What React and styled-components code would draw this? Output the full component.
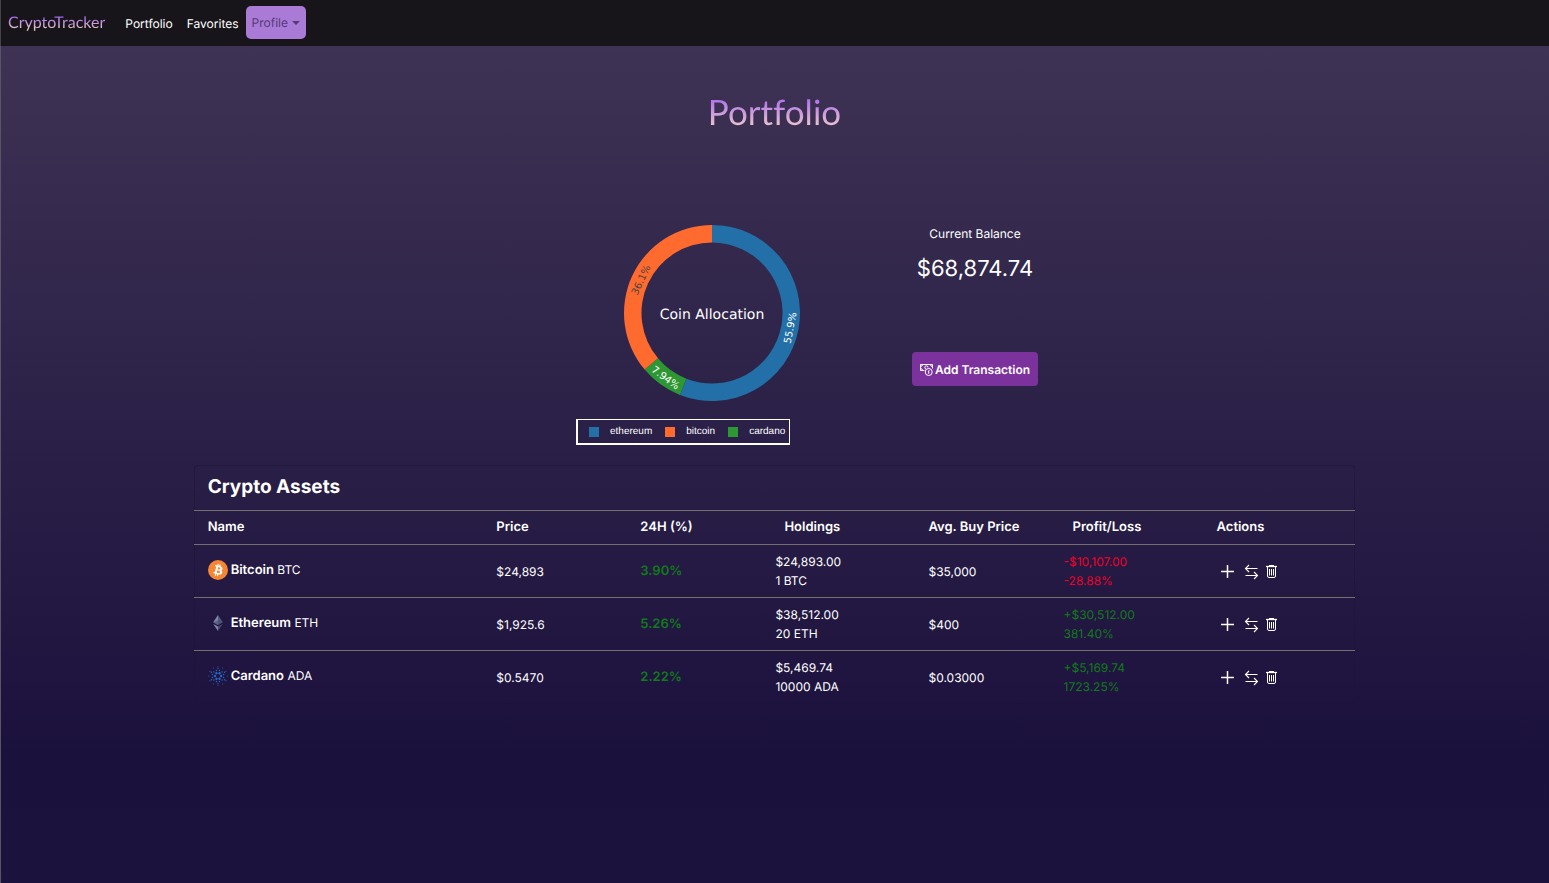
import React from "react";
import styled, { createGlobalStyle } from "styled-components";

const GlobalStyle = createGlobalStyle`
  *, *::before, *::after { box-sizing: border-box; }
  html { background: #1b123d; }
  body {
    margin: 0;
    min-height: 100vh;
    color: #fff;
    font: 400 12px/19px Inter, "Liberation Sans", sans-serif;
    text-rendering: geometricPrecision;
    background: linear-gradient(180deg, #403555 0%, #1b113d 85%, #1b123d 100%);
  }
`;

const Page = styled.div`
  min-height: 100vh;
  box-shadow: inset 1px 0 #5b5468;
`;

const NavBar = styled.nav`
  display: flex;
  align-items: center;
  height: 46px;
  padding: 0 8px;
  background: #17151a;
  box-shadow: inset 1px 0 #45424a;
`;

const Brand = styled.a`
  margin-right: 13px;
  font: 400 16px/22px Lato, sans-serif;
  text-decoration: none;
  color: transparent;
  background: linear-gradient(180deg, #a566f0 20%, #f5dcc0 90%);
  background-clip: text;
`;

const NavLink = styled.a`
  padding: 6px 7px;
  color: #fff;
  text-decoration: none;
`;

const ProfileButton = styled.button`
  display: flex;
  align-items: center;
  gap: 4px;
  height: 33px;
  margin-bottom: 1px;
  padding: 0 6px;
  border: 0;
  border-radius: 5px;
  font: inherit;
  text-rendering: inherit;
  color: #563a78;
  background: #a97bd6;
  &::after {
    content: "";
    border: 4px solid transparent;
    border-top-color: currentColor;
    border-bottom: 0;
  }
`;

const Title = styled.h1`
  width: fit-content;
  margin: 42px auto 86px;
  font: 400 35px/48px Lato, sans-serif;
  font-variant-ligatures: none;
  color: transparent;
  background: linear-gradient(180deg, #a566f0 15%, #f5d2c8 90%);
  background-clip: text;
`;

const Summary = styled.section`
  display: flex;
  justify-content: center;
`;

const ChartColumn = styled.div`
  display: flex;
  flex-direction: column;
  align-items: center;
  width: 401px;
  padding-top: 3px;
`;

const Legend = styled.ul`
  display: flex;
  align-items: center;
  align-self: flex-start;
  gap: 13px;
  height: 26px;
  margin: 18px 0 20px 65px;
  padding: 0 4px 0 11px;
  border: solid #fff;
  border-width: 1px 1px 2px 2px;
  list-style: none;
  font: 10px/15px "Liberation Sans", sans-serif;
`;

const LegendItem = styled.li`
  display: flex;
  align-items: center;
  gap: 11px;
  &::before {
    content: "";
    width: 10px;
    height: 10px;
    background: ${(p) => p.$color};
  }
`;

const BalanceColumn = styled.div`
  display: flex;
  flex-direction: column;
  align-items: center;
  width: 126px;
`;

const BalanceLabel = styled.p`
  margin: 2px 0 9px;
`;

const Balance = styled.p`
  margin: 0 0 66px;
  font-size: 22px;
  line-height: 34px;
`;

const AddButton = styled.button`
  display: flex;
  align-items: center;
  justify-content: center;
  gap: 2px;
  width: 100%;
  height: 34px;
  padding: 0;
  border: 0;
  border-radius: 4px;
  font: 600 12px/19px Inter, sans-serif;
  text-rendering: inherit;
  white-space: nowrap;
  color: #fff;
  background: #7b329d;
`;

const Panel = styled.section`
  width: 75%;
  margin: 0 auto;
  border-radius: 4px;
  box-shadow: inset 0 0 0 1px #1b143880;
`;

const PanelTitle = styled.h2`
  margin: 0;
  padding: 8px 14px 9px;
  font-size: 19px;
  line-height: 28px;
  font-weight: 700;
`;

const Table = styled.table`
  width: 100%;
  table-layout: fixed;
  border-collapse: separate;
  border-spacing: 0;
`;

const HeadCell = styled.th`
  width: ${(p) => (p.$wide ? "24.85%" : "12.4%")};
  height: 35px;
  padding: 0 14px 1px;
  border: solid #75706f;
  border-width: 1px 0;
  text-align: left;
  font-size: 13px;
  font-weight: 600;
  white-space: nowrap;
  &:last-child { width: auto; }
`;

const Cell = styled.td`
  height: 53px;
  padding: 0 ${(p) => (p.$stacked ? 5 : 14)}px;
  border-bottom: 1px solid #75706f;
  color: ${(p) => p.$color || "#fff"};
  font-size: ${(p) => (p.$strong ? 13 : 12)}px;
  font-weight: ${(p) => (p.$strong ? 600 : 400)};
  tr:last-child > & { border-color: transparent; }
`;

const Line = styled.div`
  white-space: nowrap;
`;

const Coin = styled.div`
  display: flex;
  align-items: center;
  gap: 3px;
  padding-bottom: 2px;
  b {
    font-size: 13px;
    font-weight: 600;
  }
`;

const Actions = styled.div`
  display: flex;
  align-items: center;
  gap: 6px;
  padding: 1px 0 0 3px;
`;

const IconButton = styled.button`
  display: flex;
  padding: 0;
  border: 0;
  color: #fff;
  background: none;
  &:first-child { margin-right: 3px; }
`;

const GREEN = "#117a1a";
const RED = "#ee0028";

const SLICES = [
  { name: "ethereum", share: 55.9, label: "55.9%", color: "#236fa8", text: "#fff", rotate: -79 },
  { name: "cardano", share: 7.94, label: "7.94%", color: "#2d9733", text: "#fff", rotate: 36 },
  { name: "bitcoin", share: 36.1, label: "36.1%", color: "#ff6b2e", text: "#444", rotate: -65 },
];

const LEGEND = ["ethereum", "bitcoin", "cardano"];

const ASSETS = [
  { icon: BitcoinIcon, name: "Bitcoin", symbol: "BTC", price: "$24,893", change: "3.90%", value: "$24,893.00", amount: "1 BTC", average: "$35,000", profit: "-$10,107.00", percent: "-28.88%", loss: true },
  { icon: EthereumIcon, name: "Ethereum", symbol: "ETH", price: "$1,925.6", change: "5.26%", value: "$38,512.00", amount: "20 ETH", average: "$400", profit: "+$30,512.00", percent: "381.40%" },
  { icon: CardanoIcon, name: "Cardano", symbol: "ADA", price: "$0.5470", change: "2.22%", value: "$5,469.74", amount: "10000 ADA", average: "$0.03000", profit: "+$5,169.74", percent: "1723.25%" },
];

function point(radius, turn) {
  const a = turn * 2 * Math.PI;
  return [88 + radius * Math.sin(a), 88 - radius * Math.cos(a)];
}

function Donut() {
  const total = SLICES.reduce((sum, s) => sum + s.share, 0);
  let start = 0;
  return (
    <svg width="176" height="176" viewBox="0 0 176 176" role="img" aria-label="Coin Allocation" overflow="visible" fontFamily="DejaVu Sans, sans-serif" textAnchor="middle">
      {SLICES.map((s) => {
        const from = start;
        const to = from + s.share / total;
        start = to;
        const large = to - from > 0.5 ? 1 : 0;
        const [lx, ly] = point(79, (from + to) / 2);
        return (
          <g key={s.name}>
            <path
              fill={s.color}
              d={`M${point(88, from)}A88 88 0 ${large} 1 ${point(88, to)}L${point(70.5, to)}A70.5 70.5 0 ${large} 0 ${point(70.5, from)}Z`}
            />
            <text transform={`translate(${lx} ${ly}) rotate(${s.rotate})`} y="4" fontSize="10" fill={s.text}>{s.label}</text>
          </g>
        );
      })}
      <text x="88" y="94" fontSize="14" fill="#fff">Coin Allocation</text>
    </svg>
  );
}

function BitcoinIcon() {
  return (
    <svg width="20" height="20" viewBox="0 0 32 32" aria-hidden="true">
      <circle cx="16" cy="16" r="16" fill="#f58634" />
      <path fill="#fff" d="M23.189 14.02c.314-2.096-1.283-3.223-3.465-3.975l.708-2.84-1.728-.43-.69 2.765c-.454-.114-.92-.22-1.385-.326l.695-2.783L15.596 6l-.708 2.839c-.376-.086-.746-.17-1.104-.26l.002-.009-2.384-.595-.46 1.846s1.283.294 1.256.312c.7.175.826.638.805 1.006l-.806 3.235c.048.012.11.03.18.057l-.183-.045-1.13 4.532c-.086.212-.303.531-.793.41.018.025-1.256-.313-1.256-.313l-.858 1.978 2.25.561c.418.105.828.215 1.231.318l-.715 2.872 1.727.43.708-2.84c.472.127.93.245 1.378.357l-.706 2.828 1.728.43.715-2.866c2.948.558 5.164.333 6.097-2.333.752-2.146-.037-3.385-1.588-4.192 1.13-.26 1.98-1.003 2.207-2.538zm-3.95 5.538c-.533 2.147-4.148.986-5.32.695l.95-3.805c1.172.293 4.929.872 4.37 3.11zm.535-5.569c-.487 1.953-3.495.96-4.47.717l.86-3.45c.975.243 4.118.696 3.61 2.733z" />
    </svg>
  );
}

function EthereumIcon() {
  return (
    <svg width="20" height="20" viewBox="0 0 20 20" aria-hidden="true">
      <path fill="#8187a5" d="M10 2v9.9l-4.8-2.6z" />
      <path fill="#51587d" d="M10 2l4.8 7.3-4.8 2.6z" />
      <path fill="#454c70" d="M10 7.2v4.7L5.2 9.3zM10 7.2l4.8 2.1-4.8 2.6z" opacity=".6" />
      <path fill="#8187a5" d="M5.2 11l4.8 2.5V18z" />
      <path fill="#454c70" d="M14.8 11L10 13.5V18z" />
    </svg>
  );
}

function CardanoIcon() {
  const rings = [
    { radius: 3.1, size: 1.2, count: 6, offset: 0 },
    { radius: 5.8, size: 0.75, count: 12, offset: 0.5 },
    { radius: 7.6, size: 0.7, count: 6, offset: 0.5 },
    { radius: 9.3, size: 0.55, count: 12, offset: 0 },
  ];
  return (
    <svg width="20" height="20" viewBox="0 0 20 20" fill="#2a66c2" aria-hidden="true">
      {rings.map((ring) =>
        Array.from({ length: ring.count }, (_, i) => {
          const a = ((i + ring.offset) / ring.count) * 2 * Math.PI;
          return <circle key={`${ring.radius}-${i}`} cx={10 + ring.radius * Math.cos(a)} cy={10 + ring.radius * Math.sin(a)} r={ring.size} />;
        })
      )}
    </svg>
  );
}

function CashIcon() {
  return (
    <svg width="13" height="13" viewBox="0 0 13 13" fill="none" stroke="#fff" aria-hidden="true">
      <path d="M4.5 7.5h-4v-6h12v4M.5 3.5q2 0 2-2M10.5 1.5q0 2 2 2M.5 5.5q2 0 2 2" />
      <path d="M8 4.5a1.6 1.6 0 1 0-2 1.500" />
      <circle cx="8.7" cy="9" r="3.5" />
      <path d="M9.5 7.5H8.7V11M7.8 9h1.6" strokeWidth=".8" />
    </svg>
  );
}

function PlusIcon() {
  return (
    <svg width="15" height="15" viewBox="0 0 15 15" fill="none" stroke="currentColor" strokeWidth="1.5" aria-hidden="true">
      <path d="M7.5 1v13M1 7.5h13" />
    </svg>
  );
}

function SwapIcon() {
  return (
    <svg width="15" height="16" viewBox="0 0 15 16" fill="none" stroke="currentColor" strokeWidth="1.1" aria-hidden="true">
      <path d="M13.500 4.500H1.500M5 1L1.500 4.500 5 8M1.500 11.500h12M10 8l3.500 3.500L10 15" />
    </svg>
  );
}

function TrashIcon() {
  return (
    <svg width="13" height="15" viewBox="0 0 13 15" fill="none" stroke="currentColor" aria-hidden="true">
      <path d="M1 2.5h11" strokeWidth="1.3" />
      <path d="M4 1.5h5M2.5 3v9q0 1.500 1.500 1.500h5q1.500 0 1.500-1.500V3M4.500 5v6.500M6.500 5v6.500M8.500 5v6.500" />
    </svg>
  );
}

export default function App() {
  return (
    <Page>
      <GlobalStyle />
      <NavBar>
        <Brand href="#home">CryptoTracker</Brand>
        <NavLink href="#portfolio">Portfolio</NavLink>
        <NavLink href="#favorites">Favorites</NavLink>
        <ProfileButton type="button" aria-haspopup="menu">Profile</ProfileButton>
      </NavBar>
      <main>
        <Title>Portfolio</Title>
        <Summary>
          <ChartColumn>
            <Donut />
            <Legend>
              {LEGEND.map((name) => (
                <LegendItem key={name} $color={SLICES.find((s) => s.name === name).color}>{name}</LegendItem>
              ))}
            </Legend>
          </ChartColumn>
          <BalanceColumn>
            <BalanceLabel>Current Balance</BalanceLabel>
            <Balance>$68,874.74</Balance>
            <AddButton type="button"><CashIcon />Add Transaction</AddButton>
          </BalanceColumn>
        </Summary>
        <Panel>
          <PanelTitle>Crypto Assets</PanelTitle>
          <Table>
            <thead>
              <tr>
                <HeadCell $wide>Name</HeadCell>
                <HeadCell>Price</HeadCell>
                <HeadCell>24H (%)</HeadCell>
                <HeadCell>Holdings</HeadCell>
                <HeadCell>Avg. Buy Price</HeadCell>
                <HeadCell>Profit/Loss</HeadCell>
                <HeadCell>Actions</HeadCell>
              </tr>
            </thead>
            <tbody>
              {ASSETS.map((a) => (
                <tr key={a.symbol}>
                  <Cell><Coin><a.icon /><span><b>{a.name}</b> {a.symbol}</span></Coin></Cell>
                  <Cell>{a.price}</Cell>
                  <Cell $color={GREEN} $strong>{a.change}</Cell>
                  <Cell $stacked><Line>{a.value}</Line><Line>{a.amount}</Line></Cell>
                  <Cell>{a.average}</Cell>
                  <Cell $stacked $color={a.loss ? RED : GREEN}><Line>{a.profit}</Line><Line>{a.percent}</Line></Cell>
                  <Cell>
                    <Actions>
                      <IconButton type="button" aria-label={`Add ${a.name}`}><PlusIcon /></IconButton>
                      <IconButton type="button" aria-label={`${a.name} transactions`}><SwapIcon /></IconButton>
                      <IconButton type="button" aria-label={`Delete ${a.name}`}><TrashIcon /></IconButton>
                    </Actions>
                  </Cell>
                </tr>
              ))}
            </tbody>
          </Table>
        </Panel>
      </main>
    </Page>
  );
}
